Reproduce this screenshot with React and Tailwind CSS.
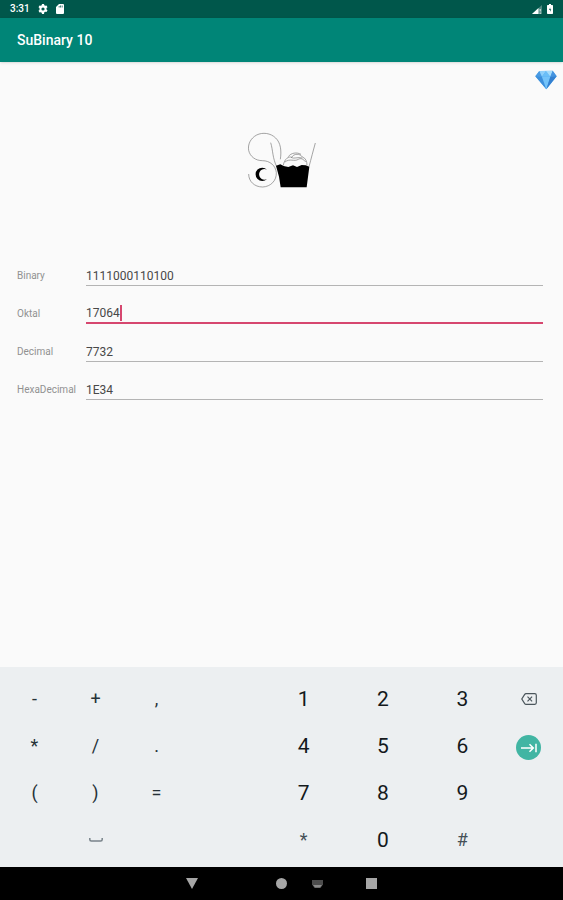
import { useState } from 'react'

const FIELDS = [
  { id: 'binary', label: 'Binary', base: 2 },
  { id: 'oktal', label: 'Oktal', base: 8 },
  { id: 'decimal', label: 'Decimal', base: 10 },
  { id: 'hexadecimal', label: 'HexaDecimal', base: 16 },
]

const SYMBOLS = ['-', '+', ',', '*', '/', '.', '(', ')', '=', '', 'space', '']
const DIGITS = ['1', '2', '3', '4', '5', '6', '7', '8', '9', '*', '0', '#']

function StatusBar() {
  return (
    <div className="h-[18px] shrink-0 bg-[#00574b] pl-[10px] pr-[10px] flex items-center justify-between text-white">
      <div className="flex items-center">
        <span className="text-[10px] leading-none font-medium">3:31</span>
        <svg className="ml-2 w-[10px] h-[10px]" viewBox="0 0 20 20" fill="currentColor">
          <path fillRule="evenodd" d="M8 0h4l.6 2.7 1.8 1 2.6-.9 2 3.5-2 1.9v2.6l2 1.9-2 3.5-2.6-.9-1.8 1L12 20H8l-.6-2.7-1.8-1-2.6.9-2-3.5 2-1.9V8.2L1 6.3l2-3.5 2.6.9 1.8-1zM10 6.8a3.2 3.2 0 1 0 0 6.4 3.2 3.2 0 0 0 0-6.4z" />
        </svg>
        <svg className="ml-2 w-2 h-[10px]" viewBox="0 0 16 20" fill="currentColor">
          <path fillRule="evenodd" d="M6 0h8a2 2 0 0 1 2 2v16a2 2 0 0 1-2 2H2a2 2 0 0 1-2-2V6zM5.5 4v3H7V4zM8.5 3v4H10V3zM11.5 3v4H13V3z" />
        </svg>
      </div>
      <div className="flex items-center gap-[5px]">
        <svg className="w-[10px] h-[9px]" viewBox="0 0 20 18">
          <path d="M20 0v18H0z" fill="#fff" opacity="0.3" />
          <path d="M13 6v12H0z" fill="#fff" />
          <path d="M15 8h3v5h-3zM15 15h3v3h-3z" fill="#fff" opacity="0.6" />
        </svg>
        <svg className="w-[6px] h-[10px]" viewBox="0 0 12 20" fill="#fff">
          <path fillRule="evenodd" d="M4 0h4v2h2.5Q12 2 12 3.5v15q0 1.5-1.5 1.5h-9Q0 20 0 18.5v-15Q0 2 1.5 2H4zM6.500 7L4 12h2v3.500L8.500 10.500H6.500z" />
        </svg>
      </div>
    </div>
  )
}

function Diamond() {
  return (
    <svg className="w-[22px] h-5" viewBox="0 0 66 60">
      <path d="M1 19L13 3l40-1 12 17-31 39z" fill="#4aa6ee" />
      <path d="M13 3l8 17L1 19z" fill="#4a9ae2" />
      <path d="M13 3h20L21 20z" fill="#8fd0fb" />
      <path d="M33 3l13 17H21z" fill="#6bbff8" />
      <path d="M33 3h20l-7 17z" fill="#a5dcfc" />
      <path d="M53 2l12 17-19 1z" fill="#4593df" />
      <path d="M1 19l20 1 13 38z" fill="#3d8fdb" />
      <path d="M21 20h25L34 58z" fill="#74c3f9" />
      <path d="M46 20l19-1-31 39z" fill="#3480d0" />
    </svg>
  )
}

function Logo() {
  return (
    <svg className="w-[70px] h-[57px]" viewBox="36 34 210 171" fill="none" stroke="#777" strokeWidth="2">
      <path d="M136 116C140 90 137 66 122 52C107 37 83 34 65 43C46 53 38 72 41 89C45 108 62 120 82 120C105 120 122 135 124 156C125 180 107 198 83 199C58 199 41 182 41 160" />
      <path d="M107 66C114 88 112 112 126 140" />
      <path d="M241 67C234 92 229 112 222 138" />
      <path d="M145 134C148 114 162 106 170 110C176 98 196 98 202 109C212 112 216 122 216 134" fill="#fafafa" />
      <path d="M160 108C168 96 186 94 198 101M150 124C164 112 178 124 190 116C198 111 206 116 212 124M168 110C176 116 188 108 202 112" />
      <path d="M123 135L136 131L146 136L160 139L174 134L186 139L200 133L212 134L223 138L215 200H137L132 168Z" fill="#000" stroke="none" />
      <path d="M96 147A20 20 0 1 0 96 175A16 16 0 1 1 96 147Z" fill="#000" stroke="none" />
    </svg>
  )
}

function Field({ field, value, active, onFocus, onChange }) {
  return (
    <div className="h-[38px] flex items-center">
      <label htmlFor={field.id} className="w-[69px] shrink-0 text-[10px] leading-3 text-[#919191]">
        {field.label}
      </label>
      <div className={`flex-1 min-w-0 h-5 flex items-center ${active ? 'border-b-2 border-[#d6476f]' : 'border-b border-[#b4b4b4]'}`}>
        <input
          id={field.id}
          type="text"
          value={value}
          onFocus={onFocus}
          onChange={e => onChange(e.target.value)}
          className={`text-[12px] leading-4 text-[#484848] bg-transparent outline-none caret-transparent ${active ? 'field-sizing-content' : 'w-full'}`}
        />
        {active && <span className="w-[2px] h-4 bg-[#d6476f]" />}
      </div>
    </div>
  )
}

function Keyboard({ onKey, onDelete, onNext }) {
  return (
    <div className="shrink-0 bg-[#eceff1] pt-2 pb-1 pl-1 pr-2 flex text-[#263238]">
      <div className="flex-[183] grid grid-cols-3 auto-rows-[47px]">
        {SYMBOLS.map((s, i) => s === '' ? <span key={i} /> : (
          <button key={i} aria-label={s} onClick={() => onKey(s === 'space' ? ' ' : s)} className="flex items-center justify-center text-[18px] leading-6">
            {s === 'space' ? (
              <svg className="w-[14px] h-1" viewBox="0 0 14 4" fill="none" stroke="#78838a" strokeWidth="1.5">
                <path d="M.8 0v1.500Q.8 3 2.300 3h9.400q1.500 0 1.500-1.500V0" />
              </svg>
            ) : s}
          </button>
        ))}
      </div>
      <div className="flex-[77]" />
      <div className="flex-[238] grid grid-cols-3 auto-rows-[47px]">
        {DIGITS.map(d => (
          <button
            key={d}
            onClick={() => onKey(d)}
            className={`flex items-center justify-center leading-6 ${d === '*' || d === '#' ? 'text-[18px] text-[#455057]' : 'text-[21px] text-[#14191c]'}`}
          >
            {d}
          </button>
        ))}
      </div>
      <div className="flex-[53] grid auto-rows-[47px] content-start">
        <button aria-label="Delete" onClick={onDelete} className="flex items-center justify-center">
          <svg className="w-4 h-3" viewBox="0 0 16 12" fill="none" stroke="#4b565c" strokeWidth="1.2">
            <path d="M5 .7h8.8q1.5 0 1.5 1.5v7.6q0 1.5-1.5 1.5H5q-.8 0-1.3-.7L.8 6l2.9-4.6Q4.200.7 5 .7z" />
            <path d="M6.5 3.7l4.6 4.6M11.1 3.7L6.5 8.3" />
          </svg>
        </button>
        <button aria-label="Next" onClick={onNext} className="flex items-center justify-center pt-1">
          <span className="w-[25px] h-[25px] rounded-full bg-[#41b5a3] flex items-center justify-center">
            <svg className="w-4 h-[10px]" viewBox="0 0 16 10" fill="none" stroke="#fff" strokeWidth="1.5">
              <path d="M0 5h12M8.5 1.2L12.3 5 8.5 8.8M15 .8v8.4" />
            </svg>
          </span>
        </button>
      </div>
    </div>
  )
}

function NavBar() {
  return (
    <nav className="h-[33px] shrink-0 bg-black flex items-center justify-center">
      <button aria-label="Back" className="w-[126px] flex justify-center">
        <svg className="w-3 h-[11px]" viewBox="0 0 12 11" fill="#a6a6a6"><path d="M0 0h12L6 11z" /></svg>
      </button>
      <button aria-label="Home" className="w-[54px] flex justify-center">
        <span className="w-[11px] h-[11px] rounded-full bg-[#a6a6a6]" />
      </button>
      <button aria-label="Switch keyboard" className="w-[18px] flex justify-center">
        <svg className="w-[11px] h-2" viewBox="0 0 11 8">
          <path d="M0 0h11v4.5L8.500 8h-6L0 4.500z" fill="#4c4c4c" />
          <path d="M1 5h9L8 7.500H3z" fill="#8c8c8c" />
        </svg>
      </button>
      <button aria-label="Recents" className="w-[90px] mr-[18px] flex justify-center">
        <span className="w-[11px] h-[11px] bg-[#a6a6a6]" />
      </button>
    </nav>
  )
}

export default function App() {
  const [number, setNumber] = useState(7732)
  const [active, setActive] = useState(1)

  function update(text, base) {
    const n = parseInt(text, base)
    setNumber(Number.isNaN(n) ? 0 : n)
  }

  const base = FIELDS[active].base
  const current = number.toString(base)

  return (
    <div className="min-h-screen flex flex-col bg-[#fafafa] font-[Roboto,sans-serif]">
      <StatusBar />
      <header className="h-11 shrink-0 bg-[#008577] px-[17px] flex items-center shadow-sm">
        <h1 className="text-[14px] leading-5 font-medium text-white">SuBinary 10</h1>
      </header>

      <main className="flex-1">
        <div className="flex justify-end pt-2 pr-[6px]">
          <button aria-label="Premium"><Diamond /></button>
        </div>
        <div className="flex justify-center pt-[42px] pb-[68px]">
          <Logo />
        </div>
        <div className="pl-[17px] pr-5">
          {FIELDS.map((f, i) => (
            <Field
              key={f.id}
              field={f}
              value={number.toString(f.base).toUpperCase()}
              active={i === active}
              onFocus={() => setActive(i)}
              onChange={text => update(text, f.base)}
            />
          ))}
        </div>
      </main>

      <Keyboard
        onKey={k => update(current + k, base)}
        onDelete={() => update(current.slice(0, -1), base)}
        onNext={() => setActive((active + 1) % FIELDS.length)}
      />
      <NavBar />
    </div>
  )
}
